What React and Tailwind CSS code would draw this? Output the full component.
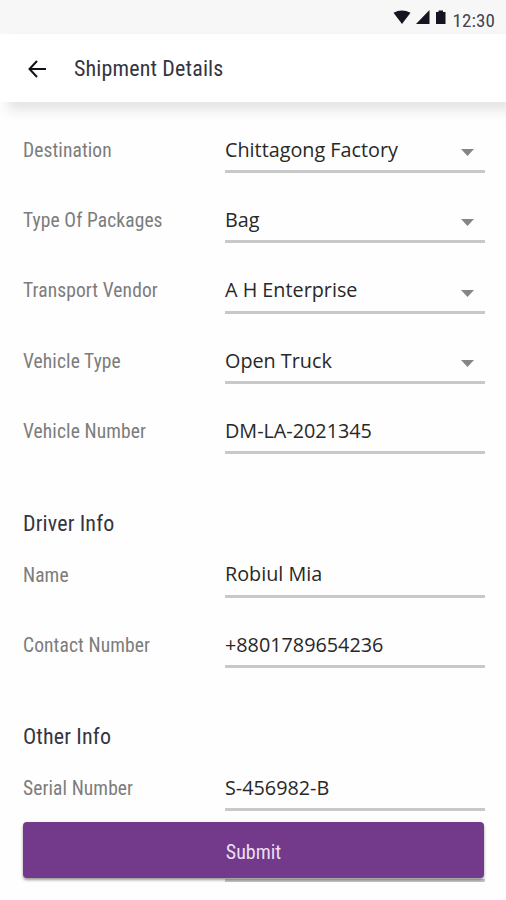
const VEHICLE_FIELDS = [
  { label: 'Destination', value: 'Chittagong Factory', select: true },
  { label: 'Type Of Packages', value: 'Bag', select: true },
  { label: 'Transport Vendor', value: 'A H Enterprise', select: true },
  { label: 'Vehicle Type', value: 'Open Truck', select: true },
  { label: 'Vehicle Number', value: 'DM-LA-2021345' },
]

const DRIVER_FIELDS = [
  { label: 'Name', value: 'Robiul Mia' },
  { label: 'Contact Number', value: '+8801789654236' },
]

const OTHER_FIELDS = [
  { label: 'Serial Number', value: 'S-456982-B' },
  { label: '', value: '' },
]

function StatusBar() {
  return (
    <div className="flex h-[34px] shrink-0 items-center justify-end bg-[#f7f7f7] pr-[11px] pt-[6px] text-[#151522]">
      <svg width="54" height="15" viewBox="0 0 54 15" fill="currentColor" className="mr-[6px] mt-[-5px]" aria-hidden>
        <path d="M0.5 2.8Q9 -2 17.5 2.8L9 14Z" />
        <path d="M36.5 0V14H23Z" />
        <path d="M43 2H45.5V0.5H50V2H52.5V14H43Z" />
      </svg>
      <span className="text-[19px] leading-none tracking-[0.1px] text-[#44444f] [font-stretch:75%]">12:30</span>
    </div>
  )
}

function Field({ label, value, select }) {
  return (
    <div className="flex h-[47px] items-stretch">
      <label className="flex w-[201.5px] items-center pt-[2px] text-[19.5px] tracking-[0.1px] text-[#7c7c7c] [font-stretch:75%]">
        {label}
      </label>
      <div className="flex flex-1 items-center justify-between border-b-[3px] border-[#c8c8c8] pl-[0.5px] pr-[11px] pt-[3px] font-['Open_Sans',sans-serif] text-[19.8px] text-[#282828]">
        <span className="whitespace-nowrap">{value}</span>
        {select && (
          <svg width="13" height="7" viewBox="0 0 13 7" className="mt-[6px]" fill="#858585" aria-hidden>
            <path d="M0 0H13L6.5 7Z" />
          </svg>
        )}
      </div>
    </div>
  )
}

function FieldGroup({ title, fields }) {
  return (
    <section>
      {title && (
        <h2 className="mb-[13px] text-[22px] leading-[28px] tracking-[0.15px] text-[#353542] [font-stretch:75%]">
          {title}
        </h2>
      )}
      <div className="flex flex-col gap-[23.3px]">
        {fields.map((f) => (
          <Field key={f.label} {...f} />
        ))}
      </div>
    </section>
  )
}

export default function App() {
  return (
    <div className="relative flex h-[900px] w-[506px] flex-col overflow-hidden bg-[#fefefe] font-['Roboto_Condensed',Roboto,sans-serif]">
      <StatusBar />
      <header className="flex h-[68px] shrink-0 items-center bg-white pl-[28px] shadow-[8px_8px_12px_rgba(0,0,0,0.11)]">
        <svg width="19" height="18" viewBox="0 0 19 18" fill="none" stroke="#111118" strokeWidth="2" className="mt-[2px]" aria-hidden>
          <path d="M18 9H1.5M9 1L1.5 9L9 17" />
        </svg>
        <h1 className="ml-[27px] pt-[1px] text-[22px] tracking-[0.15px] text-[#353542] [font-stretch:75%]">
          Shipment Details
        </h1>
      </header>
      <main className="flex flex-col gap-[55.5px] pl-[23px] pr-[21px] pt-[24px]">
        <FieldGroup fields={VEHICLE_FIELDS} />
        <FieldGroup title="Driver Info" fields={DRIVER_FIELDS} />
        <FieldGroup title="Other Info" fields={OTHER_FIELDS} />
      </main>
      <button className="absolute bottom-[22px] left-[23px] h-[56px] w-[461px] rounded-[4px] bg-[#733a8b] pt-[3px] text-[20px] text-[#eadff0] shadow-[0_2px_3px_rgba(0,0,0,0.4)] [font-stretch:75%]">
        Submit
      </button>
    </div>
  )
}
